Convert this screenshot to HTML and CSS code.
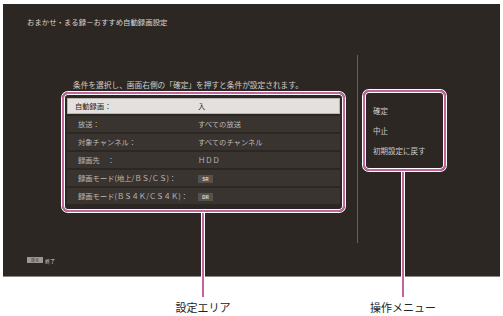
FILE: index.html
```html
<!DOCTYPE html>
<html lang="ja">
<head>
<meta charset="utf-8">
<link rel="stylesheet" href="styles.css">
</head>
<body>
<div class="page">
  <div class="screen">
    <div class="title">おまかせ・まる録－おすすめ自動録画設定</div>
    <div class="main">
      <div class="left">
        <p class="hint">条件を選択し、画面右側の「確定」を押すと条件が設定されます。</p>
        <div class="settings">
          <div class="row sel"><span class="lab">自動録画：</span><span class="val">入</span></div>
          <div class="row"><span class="lab">放送：</span><span class="val">すべての放送</span></div>
          <div class="row"><span class="lab">対象チャンネル：</span><span class="val">すべてのチャンネル</span></div>
          <div class="row"><span class="lab">録画先　：</span><span class="val">ＨＤＤ</span></div>
          <div class="row"><span class="lab">録画モード(地上/ＢＳ/ＣＳ)：</span><span class="val"><span class="tag">SR</span></span></div>
          <div class="row"><span class="lab">録画モード(ＢＳ４Ｋ/ＣＳ４Ｋ)：</span><span class="val"><span class="tag">DR</span></span></div>
        </div>
      </div>
      <div class="divider"></div>
      <div class="right">
        <div class="menu">
          <div class="item">確定</div>
          <div class="item">中止</div>
          <div class="item">初期設定に戻す</div>
        </div>
      </div>
    </div>
    <div class="footer"><span class="key">戻る</span><span class="ftxt">終了</span></div>
  </div>
  <div class="callout c1"><span class="line"></span><span class="label">設定エリア</span></div>
  <div class="callout c2"><span class="line"></span><span class="label">操作メニュー</span></div>
</div>
</body>
</html>
```
FILE: styles.css
```css
* { box-sizing: border-box; }
html, body { margin: 0; padding: 0; background: #fff; }
body { font-family: "Noto Sans CJK JP", "Noto Sans", sans-serif; }
.page { position: relative; width: 503px; height: 316px; overflow: hidden; }
.screen {
  margin: 4px 0 0 3px;
  width: 497px;
  height: 273px;
  background: #2c2723;
  border-bottom: 1px solid #8a8682;
  display: flex;
  flex-direction: column;
}
.title {
  padding: 13px 0 0 24px;
  font-size: 7.4px;
  line-height: 10px;
  color: #d8d5d2;
}
.main {
  display: flex;
  margin-top: 28px;
  height: 188px;
}
.left { width: 283px; margin-left: 59px; }
.hint {
  margin: 25px 0 2px 0;
  padding-left: 11px;
  font-size: 7.7px;
  line-height: 10px;
  color: #cfcbc8;
  white-space: nowrap;
}
.settings, .menu {
  border: 2px solid #c4649c;
  border-radius: 6px;
  box-shadow: 0 0 0 1px #fff, inset 0 0 0 1px #fff;
}
.settings {
  height: 120px;
  padding: 4px 3px 0 3px;
  display: flex;
  flex-direction: column;
  gap: 2px;
}
.row {
  height: 16px;
  display: flex;
  align-items: center;
  background: #3a3430;
  font-size: 7.3px;
  color: #bdb9b5;
  padding-left: 11px;
}
.row.sel {
  background: #e3e0dd;
  color: #2a2522;
  padding-left: 8px;
  box-shadow: inset 0 0 0 1px #bab6b2;
}
.lab { width: 120px; white-space: nowrap; }
.row.sel .lab { width: 123px; }
.val { white-space: nowrap; }
.tag {
  display: inline-block;
  width: 15px;
  height: 8px;
  line-height: 8px;
  background: #57514d;
  color: #d8d5d2;
  font-size: 5px;
  font-weight: bold;
  text-align: center;
  vertical-align: middle;
}
.divider { width: 1px; background: #66615d; margin-left: 12px; }
.right { margin-left: 5px; }
.menu {
  margin-top: 35px;
  width: 83px;
  height: 81px;
  padding: 14px 0 0 8px;
  display: flex;
  flex-direction: column;
  gap: 10px;
}
.item { font-size: 7.5px; line-height: 10px; color: #cfcbc8; white-space: nowrap; }
.footer {
  margin-top: 13px;
  padding-left: 24px;
  display: flex;
  align-items: center;
  gap: 2px;
  height: 8px;
}
.key {
  width: 16px;
  height: 6px;
  background: #9c9793;
  color: #3a3430;
  font-size: 4px;
  line-height: 6px;
  text-align: center;
}
.ftxt { font-size: 5px; color: #cfcbc8; }
.callout { position: absolute; display: flex; flex-direction: column; align-items: center; }
.callout .line {
  width: 4px;
  background: #c4649c;
  border-left: 1px solid #fff;
  border-right: 1px solid #fff;
}
.callout .label { font-size: 11px; line-height: 14px; color: #222; white-space: nowrap; margin-top: 3px; }
.c1 { left: 173px; top: 213px; width: 60px; }
.c1 .line { height: 84px; }
.c2 { left: 373px; top: 172px; width: 60px; }
.c2 .line { height: 125px; }
```
